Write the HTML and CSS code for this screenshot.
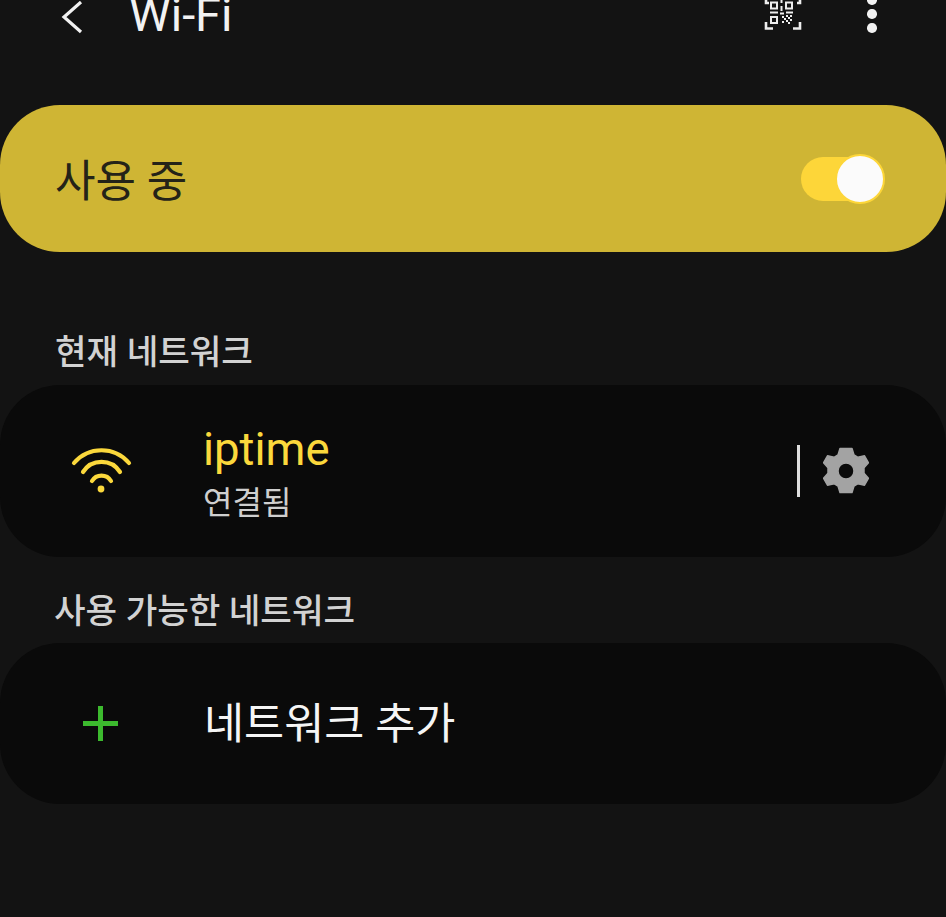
FILE: index.html
```html
<!DOCTYPE html>
<html lang="ko">
<head>
<meta charset="utf-8">
<title>Wi-Fi</title>
<link rel="stylesheet" href="styles.css">
</head>
<body>
<div class="screen">
  <header class="topbar">
    <svg class="back" width="26" height="34" viewBox="0 0 26 34"><path d="M22 1 L5 16 L22 31" fill="none" stroke="#f2f2f2" stroke-width="3.200"/></svg>
    <h1 class="title">Wi-Fi</h1>
    <svg class="qr" width="38" height="30" viewBox="0 0 38 30" fill="none" stroke="#eee">
      <path d="M2 22v6.500h7M29 28.500h7V22M2 0v3h3M36 0v3h-3" stroke-width="2.600"/>
      <path d="M7 2.500h6v6H7zM22 2.500h6v6h-6zM7 17h6v6H7z" stroke-width="2"/>
      <path d="M17.500 0v3M17.500 6v5M6 12.500h8M16 13.500h4M22 12.500h7" stroke-width="2"/>
      <path d="M18 16h2v2h-2zM22 15h2v2h-2zM26 15h2v2h-2zM20 18h2v2h-2zM24 17h2v2h-2zM18 21h2v2h-2zM22 20h2v2h-2zM26 19h2v2h-2zM24 22h2v2h-2z" fill="#eee" stroke="none"/>
    </svg>
    <div class="more"><i></i><i></i><i></i></div>
  </header>

  <section class="master">
    <span class="master-label">사용 중</span>
    <div class="switch"><div class="knob"></div></div>
  </section>

  <h2 class="group-first">현재 네트워크</h2>
  <section class="card card-current">
    <svg class="wifi" width="62" height="48" viewBox="0 0 62 48" fill="none" stroke="#fbd83c" stroke-width="4.200" stroke-linecap="round">
      <path d="M4 16 A36 36 0 0 1 59 16"/>
      <path d="M13 25 A22 22 0 0 1 50 25"/>
      <path d="M22 34 A11 11 0 0 1 41 34"/>
      <circle cx="31" cy="42" r="3.400" fill="#fbd83c" stroke="none"/>
    </svg>
    <div class="net-text">
      <div class="net-name">iptime</div>
      <div class="net-status">연결됨</div>
    </div>
    <div class="divider"></div>
    <svg class="gear" width="46" height="48" viewBox="0 0 46 48"><path fill="#a3a3a3" fill-rule="evenodd" d="M17 1.500h12l2 6.500 4 2.300 6.500-1.500 4 7-4.500 5v5.400l4.500 5-4 7-6.500-1.500-4 2.300-2 6.500H17l-2-6.500-4-2.300-6.500 1.500-4-7 4.500-5v-5.400l-4.500-5 4-7 6.500 1.500 4-2.300zM23 16a8 8 0 1 0 0 16 8 8 0 0 0 0-16z" stroke="#a3a3a3" stroke-width="1.500" stroke-linejoin="round"/></svg>
  </section>

  <h2 class="group">사용 가능한 네트워크</h2>
  <section class="card card-add">
    <svg class="plus" width="35" height="35" viewBox="0 0 35 35"><path d="M0 17.500h35M17.500 0v35" stroke="#3cba2e" stroke-width="5"/></svg>
    <div class="add-label">네트워크 추가</div>
  </section>
</div>
</body>
</html>
```

FILE: styles.css
```css
* { box-sizing: border-box; }
html, body { margin: 0; padding: 0; }
body {
  background: #131313;
  font-family: Roboto, "Noto Sans CJK KR", sans-serif;
}
.screen {
  width: 946px;
  height: 917px;
  overflow: hidden;
  display: flex;
  flex-direction: column;
}
.topbar {
  height: 120px;
  margin-top: -15px;
  padding: 0 0 0 59px;
  display: flex;
  align-items: flex-start;
  flex: none;
}
.back { flex: none; margin-top: 16px; }
.title {
  margin: 0 0 0 44px;
  font-size: 47px;
  font-weight: 400;
  line-height: 60px;
  color: #f2f2f2;
  flex: 1;
}
.qr { flex: none; margin: 15px 65px 0 0; }
.more {
  flex: none;
  width: 10px;
  margin: 10px 69px 0 0;
  display: flex;
  flex-direction: column;
  gap: 4.500px;
}
.more i { display: block; width: 9.500px; height: 9.500px; border-radius: 50%; background: #f2f2f2; }
.master {
  height: 147px;
  flex: none;
  background: #cfb534;
  border-radius: 60px;
  padding: 0 63px 0 55px;
  display: flex;
  align-items: center;
  justify-content: space-between;
}
.master-label { font-size: 44px; font-weight: 400; color: #242318; line-height: 50px; margin-top: 6px; }
.switch {
  width: 82px;
  height: 44px;
  border-radius: 22px;
  background: #fdd639;
  position: relative;
}
.knob {
  position: absolute;
  right: -2px;
  top: -3px;
  width: 50px;
  height: 50px;
  border-radius: 50%;
  background: #fbfbfb;
  border: 2px solid #fdd639;
}
h2 {
  margin: 0;
  font-size: 34.300px;
  font-weight: 500;
  color: #d2d2d2;
  line-height: 40px;
  flex: none;
}
.group-first { margin-top: 80px; padding-left: 55px; }
.group { margin-top: 34px; padding-left: 54px; }
.card {
  flex: none;
  background: #0a0a0a;
  border-radius: 60px;
  display: flex;
  align-items: center;
}
.card-current { height: 172px; margin-top: 13px; padding-left: 70px; padding-right: 77px; }
.wifi { flex: none; }
.net-text { margin-left: 71px; flex: 1; padding-top: 6px; }
.net-name { font-size: 45.500px; line-height: 52px; color: #fbd83c; }
.net-status { font-size: 32px; line-height: 42px; color: #cfcfcf; margin-top: 6px; }
.divider { width: 3px; height: 52px; background: #dedede; margin-right: 23px; }
.gear { flex: none; }
.card-add { height: 161px; margin-top: 12px; padding-left: 83px; }
.plus { flex: none; }
.add-label { margin: 2px 0 0 86px; font-size: 43.600px; color: #f5f5f5; line-height: 52px; }
```
